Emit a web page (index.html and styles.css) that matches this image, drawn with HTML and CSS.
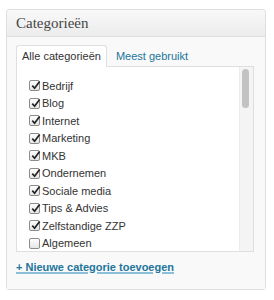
FILE: index.html
```html
<!DOCTYPE html>
<html>
<head>
<meta charset="utf-8">
<link rel="stylesheet" href="styles.css">
</head>
<body>
<div class="box">
  <div class="box-head"><h3 class="title">Categorieën</h3></div>
  <div class="box-body">
    <ul class="tabs">
      <li class="tab active">Alle categorieën</li>
      <li class="tab link-tab">Meest gebruikt</li>
    </ul>
    <div class="panel">
      <ul class="cats">
        <li class="cat"><span class="cb checked"><svg viewBox="0 0 11 11" width="11" height="11"><path d="M2.3 5.6 L4.6 8.2 L9.6 1.4" fill="none" stroke="#222" stroke-width="1.7"/></svg></span>Bedrijf</li>
        <li class="cat"><span class="cb checked"><svg viewBox="0 0 11 11" width="11" height="11"><path d="M2.3 5.6 L4.6 8.2 L9.6 1.4" fill="none" stroke="#222" stroke-width="1.7"/></svg></span>Blog</li>
        <li class="cat"><span class="cb checked"><svg viewBox="0 0 11 11" width="11" height="11"><path d="M2.3 5.6 L4.6 8.2 L9.6 1.4" fill="none" stroke="#222" stroke-width="1.7"/></svg></span>Internet</li>
        <li class="cat"><span class="cb checked"><svg viewBox="0 0 11 11" width="11" height="11"><path d="M2.3 5.6 L4.6 8.2 L9.6 1.4" fill="none" stroke="#222" stroke-width="1.7"/></svg></span>Marketing</li>
        <li class="cat"><span class="cb checked"><svg viewBox="0 0 11 11" width="11" height="11"><path d="M2.3 5.6 L4.6 8.2 L9.6 1.4" fill="none" stroke="#222" stroke-width="1.7"/></svg></span>MKB</li>
        <li class="cat"><span class="cb checked"><svg viewBox="0 0 11 11" width="11" height="11"><path d="M2.3 5.6 L4.6 8.2 L9.6 1.4" fill="none" stroke="#222" stroke-width="1.7"/></svg></span>Ondernemen</li>
        <li class="cat"><span class="cb checked"><svg viewBox="0 0 11 11" width="11" height="11"><path d="M2.3 5.6 L4.6 8.2 L9.6 1.4" fill="none" stroke="#222" stroke-width="1.7"/></svg></span>Sociale media</li>
        <li class="cat"><span class="cb checked"><svg viewBox="0 0 11 11" width="11" height="11"><path d="M2.3 5.6 L4.6 8.2 L9.6 1.4" fill="none" stroke="#222" stroke-width="1.7"/></svg></span>Tips &amp; Advies</li>
        <li class="cat"><span class="cb checked"><svg viewBox="0 0 11 11" width="11" height="11"><path d="M2.3 5.6 L4.6 8.2 L9.6 1.4" fill="none" stroke="#222" stroke-width="1.7"/></svg></span>Zelfstandige ZZP</li>
        <li class="cat"><span class="cb"></span>Algemeen</li>
      </ul>
      <div class="scrollbar"><div class="thumb"></div></div>
    </div>
    <a class="add-link" href="#">+ Nieuwe categorie toevoegen</a>
  </div>
</div>
</body>
</html>
```
FILE: styles.css
```css
html, body {
  margin: 0;
  padding: 0;
  background: #ffffff;
}
body {
  font-family: "Liberation Sans", Arial, sans-serif;
  color: #333;
  padding: 9px 0 0 6px;
}
.box {
  width: 258px;
  border: 1px solid #dfdfdf;
  border-radius: 3px;
  background: #f5f5f5;
}
.box-head {
  height: 26px;
  border-bottom: 1px solid #dfdfdf;
  background: linear-gradient(#f9f9f9, #ececec);
  border-radius: 3px 3px 0 0;
  display: flex;
  align-items: center;
}
.title {
  margin: 0;
  padding-left: 9px;
  font-family: "Liberation Serif", "Times New Roman", serif;
  font-weight: normal;
  font-size: 15px;
  color: #464646;
}
.box-body {
  padding: 9px 11px 14px 9px;
  background: #f9f9f9;
}
.tabs {
  list-style: none;
  margin: 0;
  padding: 0;
  display: flex;
  align-items: flex-end;
  height: 21px;
  position: relative;
  z-index: 1;
}
.tab {
  font-size: 11px;
  line-height: 21px;
  padding: 0 5px;
}
.tab.active {
  background: #fff;
  border: 1px solid #dfdfdf;
  border-bottom: none;
  border-radius: 3px 3px 0 0;
  height: 21px;
  color: #333;
}
.tab.link-tab {
  color: #21759b;
  margin-left: 4px;
  height: 21px;
}
.panel {
  position: relative;
  height: 184px;
  border: 1px solid #dfdfdf;
  background: #fff;
  margin-top: -1px;
  overflow: hidden;
}
.cats {
  list-style: none;
  margin: 0;
  padding: 10px 0 0 12px;
}
.cat {
  display: flex;
  align-items: center;
  height: 17.5px;
  font-size: 11px;
  color: #333;
}
.cb {
  width: 9px;
  height: 9px;
  border: 1px solid #8c8c8c;
  border-radius: 2px;
  background: linear-gradient(#fdfdfd, #e6e6e6);
  margin-right: 2px;
  position: relative;
  flex: none;
}
.cb svg {
  position: absolute;
  left: 0;
  top: -1px;
}
.scrollbar {
  position: absolute;
  right: 0;
  top: 0;
  bottom: 0;
  width: 13px;
  background: #f4f4f4;
  border-left: 1px solid #ececec;
}
.thumb {
  position: absolute;
  left: 2px;
  top: 2px;
  width: 7px;
  height: 39px;
  border-radius: 4px;
  background: #c2c2c2;
}
.add-link {
  display: inline-block;
  margin-top: 8px;
  font-size: 11px;
  font-weight: bold;
  color: #21759b;
  text-decoration: underline;
  text-decoration-color: #8cc0da;
  text-decoration-thickness: 2px;
  text-underline-offset: 1px;
  line-height: 14px;
}
```
